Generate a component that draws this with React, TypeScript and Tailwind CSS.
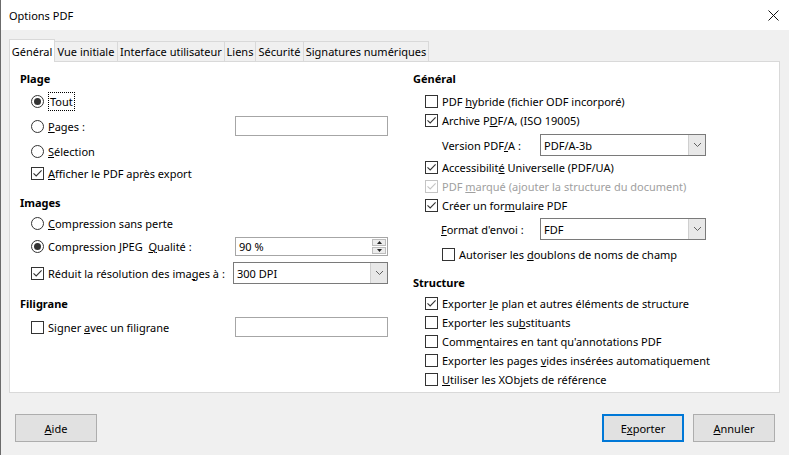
import type { ReactNode } from "react";

function Check({ checked, disabled }: { checked?: boolean; disabled?: boolean }) {
  return (
    <span
      className={`flex h-[13px] w-[13px] shrink-0 items-center justify-center border bg-white ${
        disabled ? "border-[#c4c4c4]" : "border-[#333333]"
      }`}
    >
      {checked && (
        <svg width="11" height="11" viewBox="0 0 11 11">
          <path
            d="M1.5 5.3 L4.2 8 L9.6 2.4"
            fill="none"
            stroke={disabled ? "#c4c4c4" : "#333333"}
            strokeWidth="1.1"
          />
        </svg>
      )}
    </span>
  );
}

function Radio({ checked }: { checked?: boolean }) {
  return (
    <span className="flex h-[13px] w-[13px] shrink-0 items-center justify-center rounded-full border border-[#333333] bg-white">
      {checked && <span className="h-[7px] w-[7px] rounded-full bg-[#333333]" />}
    </span>
  );
}

function Option({
  control,
  children,
  className = "",
  disabled,
}: {
  control: ReactNode;
  children: ReactNode;
  className?: string;
  disabled?: boolean;
}) {
  return (
    <div className={`flex items-center gap-[4px] whitespace-nowrap ${className}`}>
      {control}
      <span className={disabled ? "text-[#a0a0a0]" : ""}>{children}</span>
    </div>
  );
}

function Chevron() {
  return (
    <svg width="9" height="6" viewBox="0 0 9 6">
      <path d="M1 1 L4.5 4.5 L8 1" fill="none" stroke="#606060" strokeWidth="1" />
    </svg>
  );
}

function Select({ value, className = "" }: { value: string; className?: string }) {
  return (
    <div className={`flex h-[22px] border border-[#7a7a7a] bg-white ${className}`}>
      <span className="flex flex-1 items-center pl-[3px]">{value}</span>
      <span className="flex w-[17px] items-center justify-center border-l border-[#cfcfcf] bg-[#e8e8e8]">
        <Chevron />
      </span>
    </div>
  );
}

function Heading({ children, className = "" }: { children: ReactNode; className?: string }) {
  return <div className={`flex h-[18px] items-center font-bold ${className}`}>{children}</div>;
}

const tabs = [
  { label: "Général", w: "w-[46px]" },
  { label: "Vue initiale", w: "w-[64px]" },
  { label: "Interface utilisateur", w: "w-[108px]" },
  { label: "Liens", w: "w-[32px]" },
  { label: "Sécurité", w: "w-[49px]" },
  { label: "Signatures numériques", w: "w-[126px]" },
];

export default function App() {
  return (
    <div className="flex h-[455px] w-[789px] flex-col border-l border-[#6b6b6b] bg-[#f0f0f0] font-['Noto_Sans',sans-serif] text-[11px] leading-none text-black">
      {/* title bar */}
      <div className="flex h-[30px] items-center justify-between bg-white pl-[8px] pr-[8px]">
        <span>Options PDF</span>
        <svg width="11" height="11" viewBox="0 0 11 11" className="mr-[2px]">
          <path d="M0.5 0.5 L10.5 10.5 M10.5 0.5 L0.5 10.5" stroke="#111" strokeWidth="1" />
        </svg>
      </div>

      {/* tabs */}
      <div className="ml-[8px] mt-[9px] flex h-[22px] items-end">
        {tabs.map((t, i) => (
          <div
            key={t.label}
            className={`flex items-center justify-center whitespace-nowrap border border-b-0 border-[#d9d9d9] ${t.w} ${
              i === 0 ? "relative z-10 -mb-px h-[23px] bg-white" : "-ml-px h-[20px] bg-[#f0f0f0]"
            }`}
          >
            {t.label}
          </div>
        ))}
      </div>

      {/* panel */}
      <div className="ml-[8px] mr-[9px] flex h-[332px] border border-[#d9d9d9] bg-white pl-[10px] pt-[7px]">
        {/* left column */}
        <div className="flex w-[393px] flex-col">
          <Heading>Plage</Heading>
          <div className="ml-[11px] mt-[4px] flex h-[20px] items-center gap-[4px]">
            <Radio checked />
            <span className="border border-dotted border-black px-[1px] py-[3px]">Tout</span>
          </div>
          <div className="ml-[11px] mt-[5px] flex h-[20px] items-center justify-between pr-[25px]">
            <Option control={<Radio />}>
              <u>P</u>ages :
            </Option>
            <div className="h-[20px] w-[153px] border border-[#a6a6a6] bg-white" />
          </div>
          <Option className="ml-[11px] mt-[5px] h-[20px]" control={<Radio />}>
            <u>S</u>élection
          </Option>
          <Option className="ml-[11px] mt-[2px] h-[20px]" control={<Check checked />}>
            <u>A</u>fficher le PDF après export
          </Option>

          <Heading className="mt-[10px]">Images</Heading>
          <Option className="ml-[11px] mt-[2px] h-[20px]" control={<Radio />}>
            <u>C</u>ompression sans perte
          </Option>
          <div className="ml-[11px] mt-[3px] flex h-[20px] items-center justify-between pr-[25px]">
            <Option control={<Radio checked />}>
              Compression <u>J</u>PEG&nbsp; <u>Q</u>ualité :
            </Option>
            <div className="flex h-[19px] w-[153px] border border-[#a6a6a6] bg-white">
              <span className="flex flex-1 items-center pl-[3px]">90 %</span>
              <span className="my-[1px] mr-[1px] flex w-[14px] flex-col gap-px">
                <span className="flex flex-1 items-center justify-center border border-[#bcbcbc] bg-[#ececec]">
                  <svg width="5" height="3" viewBox="0 0 5 3">
                    <path d="M0 3 L2.5 0 L5 3 Z" fill="#222" />
                  </svg>
                </span>
                <span className="flex flex-1 items-center justify-center border border-[#bcbcbc] bg-[#ececec]">
                  <svg width="5" height="3" viewBox="0 0 5 3">
                    <path d="M0 0 L2.5 3 L5 0 Z" fill="#222" />
                  </svg>
                </span>
              </span>
            </div>
          </div>
          <div className="ml-[11px] mt-[7px] flex h-[20px] items-center justify-between pr-[25px]">
            <Option control={<Check checked />}>
              Réduit la résolution des ima<u>g</u>es à :
            </Option>
            <Select value="300 DPI" className="w-[155px]" />
          </div>

          <Heading className="mt-[11px]">Filigrane</Heading>
          <div className="ml-[11px] mt-[5px] flex h-[20px] items-center justify-between pr-[25px]">
            <Option control={<Check />}>
              Signer <u>a</u>vec un filigrane
            </Option>
            <div className="h-[20px] w-[153px] border border-[#a6a6a6] bg-white" />
          </div>
        </div>

        {/* right column */}
        <div className="flex flex-1 flex-col">
          <Heading>Général</Heading>
          <Option className="ml-[12px] mt-[5px] h-[19px]" control={<Check />}>
            PDF <u>h</u>ybride (fichier ODF incorporé)
          </Option>
          <Option className="ml-[12px] h-[19px]" control={<Check checked />}>
            Archive P<u>D</u>F/A, (ISO 19005)
          </Option>
          <div className="ml-[29px] mt-[4px] flex h-[22px] items-center whitespace-nowrap">
            <span className="w-[98px]">
              Version PDF<u>/</u>A :
            </span>
            <Select value="PDF/A-3b" className="w-[166px]" />
          </div>
          <Option className="ml-[12px] mt-[2px] h-[19px]" control={<Check checked />}>
            Accessibilit<u>é</u> Universelle (PDF/UA)
          </Option>
          <Option className="ml-[12px] h-[19px]" control={<Check checked disabled />} disabled>
            PDF <u>m</u>arqué (ajouter la structure du document)
          </Option>
          <Option className="ml-[12px] h-[19px]" control={<Check checked />}>
            Créer un for<u>m</u>ulaire PDF
          </Option>
          <div className="ml-[28px] mt-[3px] flex h-[22px] items-center whitespace-nowrap">
            <span className="w-[99px]">
              <u>F</u>ormat d'envoi :
            </span>
            <Select value="FDF" className="w-[166px]" />
          </div>
          <Option className="ml-[29px] mt-[5px] h-[19px]" control={<Check />}>
            Autoriser les <u>d</u>oublons de noms de champ
          </Option>

          <Heading className="mt-[9px]">Structure</Heading>
          <Option className="ml-[12px] mt-[3px] h-[19px]" control={<Check checked />}>
            Exporter <u>l</u>e plan et autres éléments de structure
          </Option>
          <Option className="ml-[12px] h-[19px]" control={<Check />}>
            Exporter les su<u>b</u>stituants
          </Option>
          <Option className="ml-[12px] h-[19px]" control={<Check />}>
            Comm<u>e</u>ntaires en tant qu'annotations PDF
          </Option>
          <Option className="ml-[12px] h-[19px]" control={<Check />}>
            Exporter les pages <u>v</u>ides insérées automatiquement
          </Option>
          <Option className="ml-[12px] h-[19px]" control={<Check />}>
            <u>U</u>tiliser les XObjets de référence
          </Option>
        </div>
      </div>

      {/* buttons */}
      <div className="mt-[21px] flex h-[28px] items-stretch pl-[14px] pr-[14px]">
        <button className="w-[82px] border border-[#adadad] bg-[#e1e1e1]">
          <u>A</u>ide
        </button>
        <button className="ml-auto w-[82px] border-2 border-[#0078d7] bg-[#e1e1e1]">
          E<u>x</u>porter
        </button>
        <button className="ml-[9px] w-[82px] border border-[#adadad] bg-[#e1e1e1]">
          <u>A</u>nnuler
        </button>
      </div>
    </div>
  );
}
